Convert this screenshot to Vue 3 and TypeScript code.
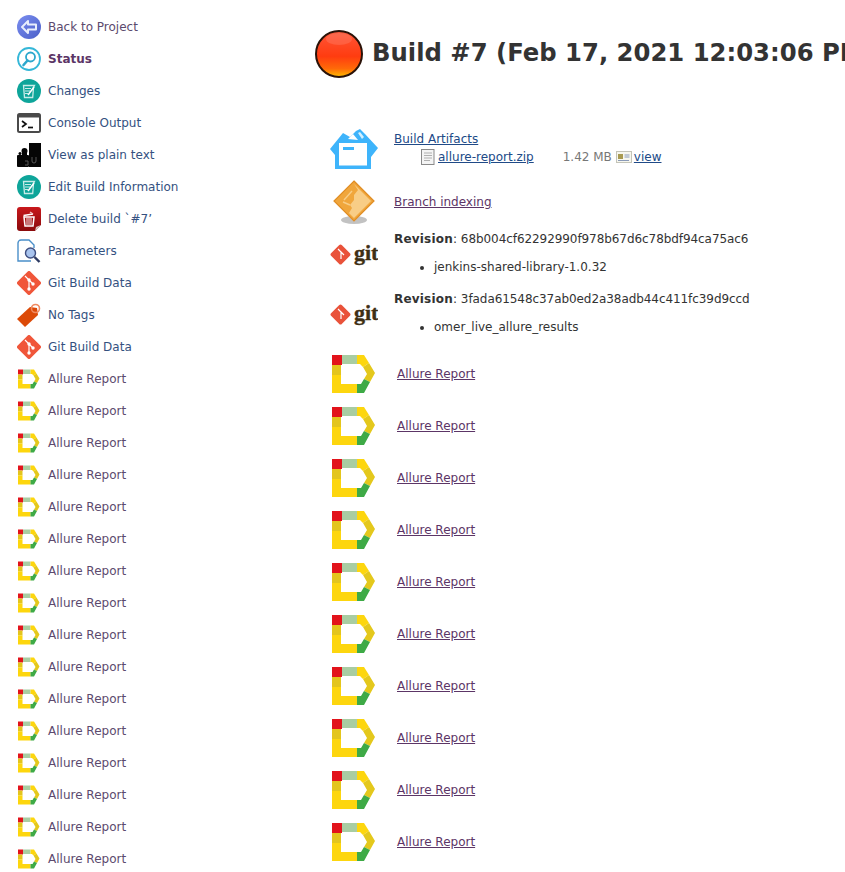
<script setup lang="ts">
interface Item { icon: string; label: string; bold?: boolean; visited?: boolean }
const items: Item[] = [
  { icon: "back", label: "Back to Project", visited: true },
  { icon: "status", label: "Status", bold: true, visited: true },
  { icon: "edit", label: "Changes" },
  { icon: "console", label: "Console Output" },
  { icon: "puzzle", label: "View as plain text" },
  { icon: "edit", label: "Edit Build Information" },
  { icon: "trash", label: "Delete build `#7’" },
  { icon: "params", label: "Parameters" },
  { icon: "gitd", label: "Git Build Data" },
  { icon: "tag", label: "No Tags" },
  { icon: "gitd", label: "Git Build Data" },
  ...Array.from({ length: 16 }, () => ({ icon: "allure", label: "Allure Report", visited: true })),
];
const reports = Array.from({ length: 10 }, (_, i) => i);
const revisions = [
  { hash: "68b004cf62292990f978b67d6c78bdf94ca75ac6", branch: "jenkins-shared-library-1.0.32" },
  { hash: "3fada61548c37ab0ed2a38adb44c411fc39d9ccd", branch: "omer_live_allure_results" },
];
</script>

<template>
  <svg class="defs" width="0" height="0" aria-hidden="true">
    <defs>
      <linearGradient id="backg" x1="0" y1="0" x2="1" y2="1">
        <stop offset="0" stop-color="#7b8ef0" />
        <stop offset="1" stop-color="#4a5fc8" />
      </linearGradient>
      <linearGradient id="ballg" x1="0" y1="0" x2="0" y2="1">
        <stop offset="0" stop-color="#f25a3c" />
        <stop offset="0.12" stop-color="#ff5030" />
        <stop offset="0.55" stop-color="#ff3c10" />
        <stop offset="0.82" stop-color="#ff6a08" />
        <stop offset="0.97" stop-color="#ffb000" />
      </linearGradient>
      <linearGradient id="trashg" x1="0" y1="0" x2="0" y2="1">
        <stop offset="0" stop-color="#c8181c" />
        <stop offset="1" stop-color="#8a0a0c" />
      </linearGradient>
    </defs>
    <symbol id="back" viewBox="0 0 24 24">
      <circle cx="12" cy="12" r="12" fill="url(#backg)" />
      <path d="M5 12l6-6v3.500h8v5h-8V18z" fill="none" stroke="#e8eefc" stroke-width="2" stroke-linejoin="round" />
    </symbol>
    <symbol id="status" viewBox="0 0 24 24">
      <circle cx="12" cy="12" r="11" fill="#fff" stroke="#35b7d8" stroke-width="1.800" />
      <circle cx="13.500" cy="10" r="4.500" fill="#fff" stroke="#2ca7cc" stroke-width="1.800" />
      <path d="M10.500 13.500L6.500 18" stroke="#2ca7cc" stroke-width="2.600" stroke-linecap="round" />
    </symbol>
    <symbol id="edit" viewBox="0 0 24 24">
      <circle cx="12" cy="12" r="12" fill="#0ea59a" />
      <path d="M6.500 6.500h11l-1 2-.8 10H7.500z" fill="none" stroke="#c8ece8" stroke-width="1.300" />
      <path d="M8 9.500h6M8 12h5M8 14.500h3" stroke="#c8ece8" stroke-width="1.100" />
      <path d="M11 16l6-8" stroke="#fff" stroke-width="1.600" />
    </symbol>
    <symbol id="console" viewBox="0 0 24 24">
      <rect x="1" y="3" width="22" height="18" rx="1.500" fill="#fff" stroke="#4a4a4a" stroke-width="2" />
      <rect x="1" y="3" width="22" height="3.500" fill="#4a4a4a" />
      <path d="M5 10l4 3-4 3" fill="none" stroke="#111" stroke-width="1.700" />
      <path d="M11 16.500h5" stroke="#111" stroke-width="1.700" />
    </symbol>
    <symbol id="puzzle" viewBox="0 0 24 24">
      <rect x="12" y="0" width="12" height="12" fill="#050505" />
      <rect x="0" y="12" width="12" height="12" rx="1" fill="#050505" />
      <rect x="12" y="12" width="12" height="12" fill="#050505" />
      <circle cx="7.500" cy="8" r="3" fill="#050505" />
      <rect x="5" y="9" width="5" height="3" fill="#050505" />
      <circle cx="3" cy="10.500" r="1.500" fill="#050505" />
      <path d="M15 14v4a2 2 0 0 0 4 0v-4M8 18h3v4H8" fill="none" stroke="#555" stroke-width="1" />
    </symbol>
    <symbol id="trash" viewBox="0 0 24 24">
      <path d="M3 0h18a3 3 0 0 1 3 3v15l-6 6H3a3 3 0 0 1-3-3V3a3 3 0 0 1 3-3z" fill="url(#trashg)" />
      <path d="M18 24l1-4 5-2z" fill="#d9c6c0" />
      <path d="M7 10h10l-1 9H8zM6.500 8.500L16 7" fill="none" stroke="#fff" stroke-width="1.500" />
      <path d="M10 11v7M12 11v7M14 11v7" stroke="#fff" stroke-width="0.900" />
      <path d="M13 5l3 2" stroke="#f2c0c0" stroke-width="1.300" />
    </symbol>
    <symbol id="params" viewBox="0 0 24 24">
      <path d="M1 4a3 3 0 0 1 3-3h8l5 5v3M1 4v18h13" fill="#fff" stroke="#4a8fc9" stroke-width="1.400" />
      <circle cx="13.500" cy="14" r="5" fill="#a9c4ee" stroke="#3e4e80" stroke-width="1.400" />
      <path d="M17.500 18l5 5" stroke="#2d3a62" stroke-width="2.400" />
    </symbol>
    <symbol id="gitd" viewBox="0 0 24 24">
      <path d="M10.500 0.700L0.700 10.500a2.100 2.100 0 0 0 0 3l9.800 9.800a2.100 2.100 0 0 0 3 0l9.800-9.800a2.100 2.100 0 0 0 0-3L13.500 0.700a2.100 2.100 0 0 0-3 0z" fill="#f0563a" />
      <path d="M8 5l4 4v9M12 9l4 4" fill="none" stroke="#fff" stroke-width="1.200" />
      <circle cx="12" cy="9" r="1.700" fill="#fff" />
      <circle cx="16" cy="13" r="1.700" fill="#fff" />
      <circle cx="12" cy="18" r="1.700" fill="#fff" />
    </symbol>
    <symbol id="tag" viewBox="0 0 24 24">
      <path d="M0 16L13 4l7 1 1 7L8 24z" fill="#dc4a08" />
      <circle cx="18.500" cy="5.500" r="4" fill="none" stroke="#f08a60" stroke-width="1.600" />
    </symbol>
    <symbol id="allure" viewBox="0 0 48 48">
      <path d="M2 5h10v10H2z" fill="#e2131b" />
      <path d="M12 5h15v9H12z" fill="#a9cda2" />
      <path d="M27 5h7l5 8-6 4-3-3h-3z" fill="#fdd60e" />
      <path d="M39 13l6 10-5 9-6-3 3-5-4-7z" fill="#e4c81c" />
      <path d="M2 15h9v10H2z" fill="#e3c51d" />
      <path d="M2 25h9v9h16v9H2z" fill="#fdd60e" />
      <path d="M27 34h4l3-5 6 3-6 11h-7z" fill="#3eaa46" />
    </symbol>
    <symbol id="box" viewBox="0 0 48 48">
      <path d="M0 22L13 6l7 4 6-6 4-2 5 5 13 14-7 9v12H5V28z" fill="#3eb4fb" />
      <path d="M9 16h28v22.500H9z" fill="#fff" />
      <path d="M13 20h11v3H13z" fill="#3eb4fb" />
      <path d="M18 12l5-5 5 6z" fill="#fff" />
      <path d="M28 6l2-1 4 5-2 2z" fill="#d4effe" />
    </symbol>
    <symbol id="branch" viewBox="0 0 48 48">
      <ellipse cx="24" cy="42" rx="13" ry="4" fill="#a8a8a8" opacity="0.7" />
      <path d="M24 3l20 20-20 20L4 23z" fill="#f0a63c" stroke="#e08d24" stroke-width="1.200" />
      <path d="M24 6L41 23 24 40 19 35 22 30 20 27 24 22 24 17 28 12z" fill="#f8cd86" />
      <path d="M14 22l8-9M13 24l7 3" stroke="#f8cd86" stroke-width="1.400" />
    </symbol>
    <symbol id="ball" viewBox="0 0 48 48">
      <circle cx="24" cy="24" r="23" fill="url(#ballg)" stroke="#2a1208" stroke-width="2" />
      <ellipse cx="24" cy="9" rx="13" ry="6" fill="#fff" opacity="0.12" />
    </symbol>
    <symbol id="gitmark" viewBox="0 0 48 48">
      <path d="M9 13.300L1.300 21a2 2 0 0 0 0 3L9 31.700a2 2 0 0 0 3 0L19.700 24a2 2 0 0 0 0-3L12 13.300a2 2 0 0 0-3 0z" fill="#e9523a" />
      <path d="M8 17l3 3v7M11 20l3 3" fill="none" stroke="#fff" stroke-width="1.200" />
    </symbol>
    <symbol id="doc" viewBox="0 0 16 16">
      <rect x="1.500" y="0.500" width="12.500" height="15" fill="#f4f4f4" stroke="#8a8a8a" />
      <path d="M4 4h8M4 6.500h8M4 9h8M4 11.500h6" stroke="#b0b0b0" />
    </symbol>
    <symbol id="card" viewBox="0 0 16 16">
      <rect x="0.500" y="2.500" width="15" height="11" fill="#f7f7ee" stroke="#c4c4b8" />
      <rect x="2" y="5" width="5" height="5" fill="#a89a50" />
      <path d="M8.500 6h5M8.500 8h5M2 11.500h11" stroke="#8a9ab8" />
    </symbol>
  </svg>

  <div class="page">
    <nav class="side">
      <a v-for="(it, i) in items" :key="i" class="task" :class="{ bold: it.bold, visited: it.visited }" href="#">
        <svg class="task-icon" width="24" height="24"><use :href="'#' + it.icon" /></svg>
        <span>{{ it.label }}</span>
      </a>
    </nav>

    <main class="main">
      <h1 class="title">
        <svg class="ball" width="48" height="48"><use href="#ball" /></svg>
        <span class="title-text">Build #7 (Feb 17, 2021 12:03:06 PM)</span>
      </h1>

      <div class="row artifacts">
        <svg class="big" width="48" height="48"><use href="#box" /></svg>
        <div class="cell">
          <a class="link" href="#">Build Artifacts</a>
          <div class="file">
            <svg width="16" height="16"><use href="#doc" /></svg>
            <a class="link name" href="#">allure-report.zip</a>
            <span class="size">1.42 MB</span>
            <svg width="16" height="16"><use href="#card" /></svg>
            <a class="link view" href="#">view</a>
          </div>
        </div>
      </div>

      <div class="row branch">
        <svg class="big" width="48" height="48"><use href="#branch" /></svg>
        <a class="link visited" href="#">Branch indexing</a>
      </div>

      <div v-for="r in revisions" :key="r.hash" class="row rev">
        <svg class="big" width="48" height="48">
          <use href="#gitmark" />
          <text x="24" y="28" class="gittext">git</text>
        </svg>
        <div class="cell">
          <div><b class="rev-label">Revision</b>: <span class="hash">{{ r.hash }}</span></div>
          <ul>
            <li>{{ r.branch }}</li>
          </ul>
        </div>
      </div>

      <div class="reports">
        <div v-for="n in reports" :key="n" class="row report">
          <svg class="big" width="48" height="48"><use href="#allure" /></svg>
          <a class="link visited" href="#">Allure Report</a>
        </div>
      </div>
    </main>
  </div>
</template>

<style>
html, body { margin: 0; height: 872px; overflow: hidden; background: #fff; }
</style>

<style scoped>
.defs { position: absolute; }
.gittext {
  font: bold 22px "Liberation Serif", "DejaVu Serif", serif;
  fill: #3f2f14;
  stroke: #3f2f14;
  stroke-width: 0.4px;
}
.page {
  display: flex;
  width: 845px;
  height: 872px;
  overflow: hidden;
  font-family: "DejaVu Sans", Verdana, sans-serif;
  font-size: 12px;
  color: #333;
}
.side {
  flex: 0 0 315px;
  padding: 11px 0 0 17px;
  box-sizing: border-box;
}
.task {
  display: flex;
  align-items: center;
  height: 32px;
  gap: 7px;
  color: #34517f;
  text-decoration: none;
  white-space: nowrap;
}
.task.visited { color: #5c4a6e; }
.task.bold { font-weight: bold; color: #5c3566; }
.task-icon { flex: none; }
.main { flex: 1; min-width: 0; }
.title {
  display: flex;
  align-items: flex-start;
  gap: 9px;
  margin: 0;
  padding-top: 30px;
  font-size: 24.3px;
  line-height: 46px;
  white-space: nowrap;
  color: #333;
}
.ball { flex: none; }
.row { display: flex; align-items: center; padding-left: 15px; gap: 16px; }
.big { flex: none; }
.link { color: #204a87; text-decoration: underline; }
.link.visited { color: #5c3566; }
.artifacts { margin-top: 49px; height: 48px; align-items: flex-start; }
.artifacts .cell { padding-top: 4px; line-height: 16px; }
.file { display: flex; align-items: center; padding-left: 26px; height: 20px; }
.name { margin-left: 2px; }
.size { margin-left: 29px; margin-right: 4px; color: #777; }
.view { margin-left: 2px; }
.branch { margin-top: 3px; height: 48px; }
.rev { height: 60px; }
.rev .cell { align-self: flex-start; line-height: 16px; padding-top: 5px; }
.rev-label { letter-spacing: 0.2px; }
.hash { letter-spacing: -0.07px; }
.rev ul { margin: 12px 0 0; padding-left: 40px; }
.reports { margin-top: 2px; }
.report { height: 52px; gap: 19px; }
</style>
